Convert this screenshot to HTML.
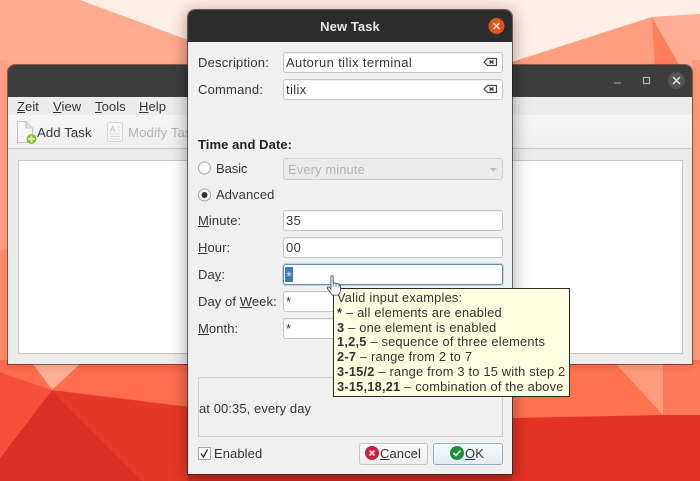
<!DOCTYPE html>
<html><head><meta charset="utf-8"><style>
html,body{margin:0;padding:0}
body{width:700px;height:481px;position:relative;overflow:hidden;font-family:"Liberation Sans",sans-serif;font-size:13px;color:#363636;background:#ffab90;letter-spacing:.08px}
#w{position:absolute;left:0;top:0;width:700px;height:481px;overflow:hidden;filter:blur(.3px)}
.a{position:absolute;white-space:nowrap}
.t{position:absolute;white-space:nowrap;line-height:16px}
.f{position:absolute;left:283px;width:218px;height:19px;background:#fff;border:1px solid #c4c4c4;border-radius:3px;line-height:19px;text-indent:2px;box-shadow:inset 0 1px 0 #f2f2f2;letter-spacing:.38px}
u{text-decoration-thickness:1px;text-underline-offset:1px}
.b{position:absolute;top:443px;height:20px;border:1px solid #c6c6c6;border-radius:3px;background:linear-gradient(#fafafa,#ededed)}
#tip div{height:14.75px;line-height:14.75px;letter-spacing:.22px}
</style></head><body><div id="w">
<svg class="a" style="left:0;top:0" width="700" height="481">
<rect width="700" height="481" fill="#ffab90"/>
<polygon points="80,0 188,40 512,62 652,17 700,14 700,0" fill="#feeee6"/>
<polygon points="512,62 652,17 655,70 512,70" fill="#ff9f80"/>
<polygon points="652,17 682,70 655,70" fill="#ff7f5c"/>
<polygon points="652,17 700,14 700,70 682,70" fill="#ffae94"/>
<rect x="0" y="60" width="8" height="312" fill="#ffa083"/>
<rect x="0" y="250" width="8" height="122" fill="#ff8b68"/>
<rect x="692" y="60" width="8" height="310" fill="#ff9a7a"/>
<polygon points="0,360 188,360 188,407 52,390 0,372" fill="#ff6d4e"/>
<polygon points="33,364 80,364 52,390" fill="#fdb096"/>
<polygon points="0,372 52,390 0,458" fill="#f5503a"/>
<polygon points="52,390 190,407 190,481 143,481" fill="#e63827"/>
<polygon points="52,390 143,481 0,481 0,458" fill="#d92f25"/>
<rect x="188" y="470" width="326" height="11" fill="#cf2c22"/>
<rect x="512" y="360" width="188" height="60" fill="#ff7350"/>
<polygon points="616,364 663,364 663,415" fill="#ff9c7c"/>
<polygon points="663,364 700,364 700,415 663,415" fill="#ff7a5a"/>
<polygon points="512,418 663,415 700,415 700,481 512,481" fill="#e33325"/>
</svg>

<!-- back window -->
<div class="a" style="left:8px;top:65px;width:684px;height:299px;background:#ececec;border-radius:7px 7px 0 0;box-shadow:0 0 0 1px rgba(60,30,20,.55),0 3px 10px rgba(0,0,0,.12);overflow:hidden">
 <div class="a" style="left:0;top:0;width:684px;height:32px;background:#3d3d3d"></div>
 <div class="a" style="left:0;top:50px;width:684px;height:33px;background:linear-gradient(#f5f5f5,#efefef);border-bottom:1px solid #c8c8c8"></div>
 <div class="a" style="left:10px;top:95px;width:663px;height:192px;background:#fff;border:1px solid #c6c6c6"></div>
</div>
<svg class="a" style="left:600px;top:65px" width="92" height="32">
 <line x1="14" y1="18" x2="21" y2="18" stroke="#aaa" stroke-width="1"/>
 <rect x="43.500" y="12.500" width="6" height="6" fill="none" stroke="#b5b5b5" stroke-width="1.200"/>
 <circle cx="76.500" cy="15.500" r="8.500" fill="#555"/>
 <path d="M73 12L80 19M80 12L73 19" stroke="#eee" stroke-width="1.300"/>
</svg>
<div class="t" style="left:17px;top:99px"><u>Z</u>eit</div>
<div class="t" style="left:53px;top:99px"><u>V</u>iew</div>
<div class="t" style="left:95px;top:99px"><u>T</u>ools</div>
<div class="t" style="left:139px;top:99px"><u>H</u>elp</div>
<svg class="a" style="left:16px;top:121px" width="22" height="24">
 <path d="M1.500 .5H10L16.500 7V21.500H1.500Z" fill="#f6f6f6" stroke="#c0c0c0"/>
 <path d="M10 .5V7H16.500" fill="#e2e2e2" stroke="#c0c0c0"/>
 <circle cx="15.500" cy="18" r="5" fill="#8cb83a"/>
 <path d="M15.500 14.500V21.500M12 18H19" stroke="#d7ec9c" stroke-width="2"/>
</svg>
<div class="t" style="left:37px;top:125px;font-size:13.200px">Add Task</div>
<svg class="a" style="left:107px;top:122px" width="17" height="21">
 <rect x=".5" y=".5" width="15" height="19" rx="2" fill="#f7f7f7" stroke="#d5d5d5"/>
 <path d="M3 12H13M3 14.500H13M3 17H13M10 5H13M10 8H13" stroke="#d8d8d8"/>
 <text x="3" y="10" font-size="8" fill="#b9b9b9" font-family="Liberation Sans">A</text>
</svg>
<div class="t" style="left:128px;top:125px;color:#b3b3b3;font-size:13.200px">Modify Task</div>

<!-- dialog -->
<div class="a" style="left:188px;top:10px;width:324px;height:464px;background:#f0f0f0;border-radius:7px 7px 0 0;box-shadow:0 0 0 1px rgba(40,20,10,.6),0 3px 16px 2px rgba(0,0,0,.33)">
 <div class="a" style="left:0;top:0;width:324px;height:32px;background:#2c2c2c;border-radius:7px 7px 0 0"></div>
</div>
<div class="t" style="left:188px;top:19px;width:324px;text-align:center;color:#e8e8e8;font-weight:bold;font-size:13px">New Task</div>
<svg class="a" style="left:488px;top:18px" width="17" height="17">
 <circle cx="8.500" cy="8" r="8" fill="#e0541f"/>
 <path d="M5.500 5L11.500 11M11.500 5L5.500 11" stroke="#fbe4d8" stroke-width="1.500"/>
</svg>

<div class="t" style="left:198px;top:55px;letter-spacing:.2px">Description:</div>
<div class="f" style="top:52px">Autorun tilix terminal</div>
<div class="t" style="left:198px;top:82px;letter-spacing:.2px">Command:</div>
<div class="f" style="top:79px">tilix</div>
<svg class="a" style="left:483px;top:57px" width="15" height="40">
 <g fill="none" stroke="#444" stroke-width="1.200"><path d="M4.500 1.500H13.500V8.500H4.500L1 5Z"/><path d="M6.500 3.500L10.500 6.500M10.500 3.500L6.500 6.500" stroke-width="1.500"/></g>
 <g transform="translate(0,27)" fill="none" stroke="#444" stroke-width="1.200"><path d="M4.500 1.500H13.500V8.500H4.500L1 5Z"/><path d="M6.500 3.500L10.500 6.500M10.500 3.500L6.500 6.500" stroke-width="1.500"/></g>
</svg>

<div class="t" style="left:198px;top:137px;font-weight:bold;color:#222">Time and Date:</div>
<svg class="a" style="left:198px;top:161px" width="14" height="42">
 <circle cx="6.500" cy="7" r="6" fill="#fafafa" stroke="#a8a8a8"/>
 <circle cx="6.500" cy="34" r="6" fill="#f8f8f8" stroke="#a8a8a8"/>
 <circle cx="6.500" cy="34" r="3" fill="#333"/>
</svg>
<div class="t" style="left:216px;top:161px;letter-spacing:-.1px">Basic</div>
<div class="a" style="left:283px;top:158px;width:218px;height:20px;background:#ebebeb;border:1px solid #d0d0d0;border-radius:3px;color:#b4b4b4;line-height:21px;text-indent:4px">Every minute</div>
<svg class="a" style="left:489px;top:167px" width="9" height="6"><path d="M1 1H8L4.500 5Z" fill="#bdbdbd"/></svg>
<div class="t" style="left:216px;top:187px">Advanced</div>

<div class="t" style="left:198px;top:213px"><u>M</u>inute:</div>
<div class="f" style="top:210px">35</div>
<div class="t" style="left:198px;top:240px"><u>H</u>our:</div>
<div class="f" style="top:237px">00</div>
<div class="t" style="left:198px;top:267px">Da<u>y</u>:</div>
<div class="f" style="top:264px;border-color:#5d8db5;box-shadow:0 0 0 1px rgba(110,160,200,.35);text-indent:0"><span class="a" style="left:1px;top:2px;width:8px;height:15px;background:#3d7fb5;color:#cfe3f2;text-align:center;line-height:18px;font-size:14px;letter-spacing:0">*</span></div>
<div class="t" style="left:198px;top:294px">Day of <u>W</u>eek:</div>
<div class="f" style="top:291px">*</div>
<div class="t" style="left:198px;top:321px"><u>M</u>onth:</div>
<div class="f" style="top:318px">*</div>

<div class="a" style="left:198px;top:377px;width:303px;height:58px;border:1px solid #cfcfcf;background:#f0f0f0"></div>
<div class="t" style="left:199px;top:401px">at 00:35, every day</div>

<svg class="a" style="left:198px;top:447px" width="13" height="13">
 <rect x=".5" y=".5" width="12" height="12" fill="#fbfbfb" stroke="#a9a9a9"/>
 <path d="M3 6.500L5.500 10L9.500 2.500" fill="none" stroke="#222" stroke-width="1.300"/>
</svg>
<div class="t" style="left:214px;top:446px">Enabled</div>

<div class="b" style="left:359px;width:67px"></div>
<svg class="a" style="left:365px;top:446px" width="15" height="15">
 <circle cx="7" cy="7" r="7" fill="#c9213f"/>
 <path d="M4.500 4.500L9.500 9.500M9.500 4.500L4.500 9.500" stroke="#f7d7dc" stroke-width="1.800"/>
</svg>
<div class="t" style="left:380px;top:446px"><u>C</u>ancel</div>
<div class="b" style="left:433px;width:68px;border-color:#8fb0c8;background:linear-gradient(#f6f9fb,#e4ecf2)"></div>
<svg class="a" style="left:450px;top:446px" width="15" height="15">
 <circle cx="7" cy="7" r="7" fill="#1b8f3c"/>
 <path d="M3.500 7L6 9.500L10.500 4.500" fill="none" stroke="#e2f5e4" stroke-width="1.800"/>
</svg>
<div class="t" style="left:465px;top:446px"><u>O</u>K</div>

<!-- tooltip -->
<div id="tip" class="a" style="left:333px;top:288px;padding:2px 0 0 3px;box-sizing:content-box;background:#fffee1;border:1px solid #2a2a2a;color:#333;font-size:12.800px;height:105px;width:232px">
<div>Valid input examples:</div>
<div><b>*</b> – all elements are enabled</div>
<div><b>3</b> – one element is enabled</div>
<div><b>1,2,5</b> – sequence of three elements</div>
<div><b>2-7</b> – range from 2 to 7</div>
<div><b>3-15/2</b> – range from 3 to 15 with step 2</div>
<div><b>3-15,18,21</b> – combination of the above</div>
</div>

<!-- cursor -->
<svg class="a" style="left:326px;top:275px" width="16" height="21" viewBox="0 0 18 24">
 <path d="M5.500 2C5.500 .5 8 .5 8 2V9.500L10 9C11.500 8.800 11.500 10 11.500 10L13.500 10C14.800 10 14.800 11 14.800 11.500C16.500 11.500 16.500 13 16.500 13V17C16.500 19 15 21.500 14 23H7L1.500 15.500C.8 14 2.500 13 3.500 14L5.500 16Z" fill="#fff" stroke="#333" stroke-width=".9"/>
 <path d="M8 9.500V14M11.300 10V14M14.600 11.500V14" stroke="#555" stroke-width=".7"/>
</svg>
</div></body></html>
